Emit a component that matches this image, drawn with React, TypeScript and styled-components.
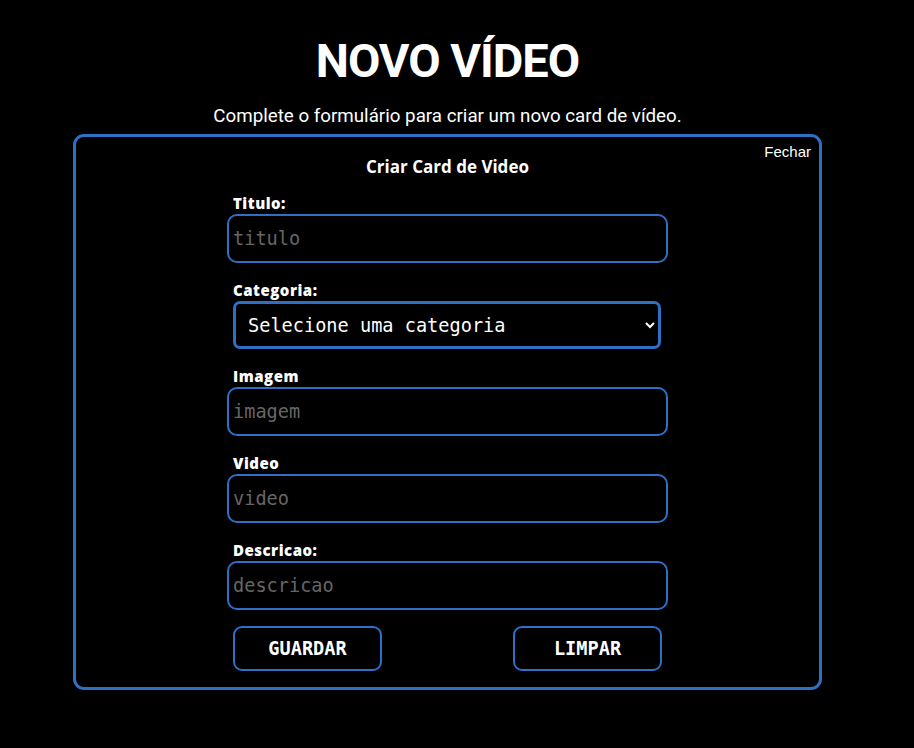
import React from "react";
import styled, { createGlobalStyle } from "styled-components";

const BLUE = "#2f6fc6";

const Global = createGlobalStyle`
  html, body { margin: 0; padding: 0; background: #000; }
  body { font-family: Roboto, "Liberation Sans", sans-serif; color: #fff; }
  * { box-sizing: border-box; }
`;

const Page = styled.main`
  width: 895px;
  min-height: 748px;
  background: #000;
  display: flex;
  flex-direction: column;
  align-items: center;
  padding-top: 34px;
`;

const Title = styled.h1`
  margin: 0;
  font-family: Roboto, "Liberation Sans", sans-serif;
  font-weight: 700;
  font-size: 47px;
  letter-spacing: -1px;
  line-height: 54px;
  color: #fff;
`;

const Subtitle = styled.p`
  margin: 18px 0 7px;
  font-family: Roboto, "Liberation Sans", sans-serif;
  font-size: 18.75px;
  line-height: 21px;
  color: #fff;
`;

const Card = styled.section`
  position: relative;
  width: 749px;
  border: 3px solid ${BLUE};
  border-radius: 11px;
  display: flex;
  flex-direction: column;
  align-items: center;
  padding: 20px 0 16px;
`;

const CloseButton = styled.button`
  position: absolute;
  top: 6px;
  right: 8px;
  background: none;
  border: none;
  padding: 0;
  color: #fff;
  font-family: "Liberation Sans", Arial, sans-serif;
  font-size: 15px;
  line-height: 17px;
  cursor: pointer;
`;

const CardTitle = styled.h2`
  margin: 0 0 19px;
  font-family: "Open Sans", "Noto Sans", sans-serif;
  font-weight: 700;
  font-size: 17px;
  line-height: 19px;
  color: #fff;
`;

const Form = styled.form`
  width: 441px;
  display: flex;
  flex-direction: column;
`;

const Field = styled.div<{ $last?: boolean }>`
  display: flex;
  flex-direction: column;
  margin-bottom: ${(p) => (p.$last ? "16px" : "19px")};
`;

const Label = styled.label`
  padding-left: 6px;
  margin-bottom: 3px;
  font-family: "Open Sans", "Noto Sans", sans-serif;
  font-weight: 800;
  font-size: 15px;
  letter-spacing: 0.5px;
  line-height: 16px;
  color: #fff;
`;

const monoFont = `"DejaVu Sans Mono", "Liberation Mono", monospace`;

const Input = styled.input`
  width: 100%;
  height: 49px;
  border: 2px solid ${BLUE};
  border-radius: 10px;
  background: #000;
  color: #fff;
  padding: 0 4px;
  font-family: ${monoFont};
  font-size: 18.6px;
  outline: none;
  &::placeholder { color: #666; }
`;

const Select = styled.select`
  width: 428px;
  height: 48px;
  margin-left: 6px;
  border: 3px solid ${BLUE};
  border-radius: 7px;
  background: #000;
  color: #fff;
  color-scheme: dark;
  padding: 0 6px 0 8px;
  font-family: ${monoFont};
  font-size: 18.6px;
  outline: none;
`;

const ButtonRow = styled.div`
  display: flex;
  justify-content: space-between;
  padding: 0 6px;
`;

const ActionButton = styled.button`
  width: 149px;
  height: 45px;
  border: 2px solid ${BLUE};
  border-radius: 9px;
  background: #000;
  color: #fff;
  font-family: ${monoFont};
  font-weight: 700;
  font-size: 18.6px;
  cursor: pointer;
`;

const fields = [{ id: "titulo", label: "Titulo:", placeholder: "titulo" }];

const rest = [
  { id: "imagem", label: "Imagem", placeholder: "imagem" },
  { id: "video", label: "Video", placeholder: "video" },
  { id: "descricao", label: "Descricao:", placeholder: "descricao" },
];

export default function App() {
  return (
    <Page>
      <Global />
      <Title>NOVO VÍDEO</Title>
      <Subtitle>Complete o formulário para criar um novo card de vídeo.</Subtitle>
      <Card>
        <CloseButton type="button">Fechar</CloseButton>
        <CardTitle>Criar Card de Video</CardTitle>
        <Form onSubmit={(e) => e.preventDefault()}>
          {fields.map((f) => (
            <Field key={f.id}>
              <Label htmlFor={f.id}>{f.label}</Label>
              <Input id={f.id} placeholder={f.placeholder} />
            </Field>
          ))}
          <Field>
            <Label htmlFor="categoria">Categoria:</Label>
            <Select id="categoria" defaultValue="">
              <option value="">Selecione uma categoria</option>
            </Select>
          </Field>
          {rest.map((f, i) => (
            <Field key={f.id} $last={i === rest.length - 1}>
              <Label htmlFor={f.id}>{f.label}</Label>
              <Input id={f.id} placeholder={f.placeholder} />
            </Field>
          ))}
          <ButtonRow>
            <ActionButton type="submit">GUARDAR</ActionButton>
            <ActionButton type="reset">LIMPAR</ActionButton>
          </ButtonRow>
        </Form>
      </Card>
    </Page>
  );
}
